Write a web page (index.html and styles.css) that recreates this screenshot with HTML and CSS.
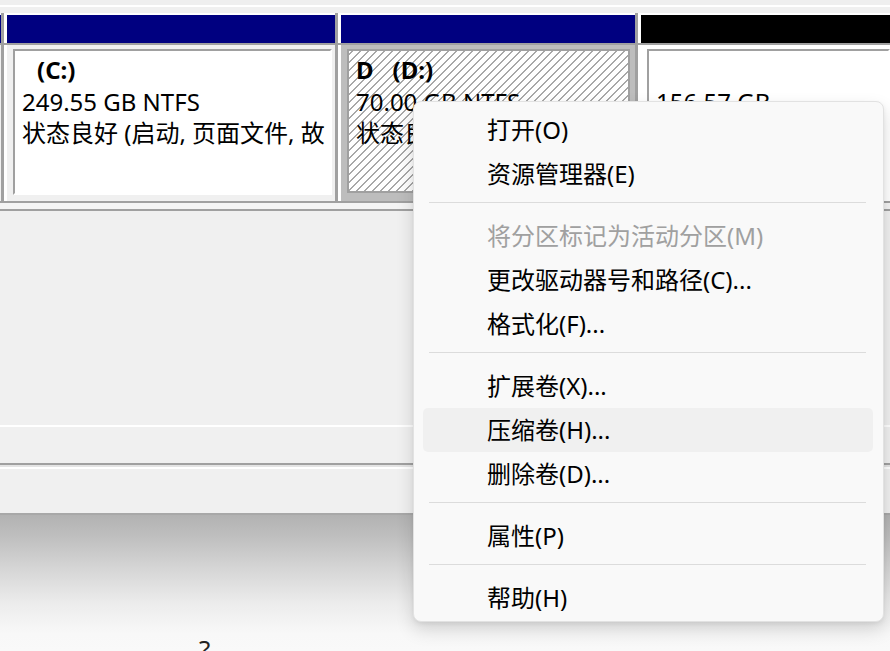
FILE: index.html
```html
<!DOCTYPE html>
<html lang="zh-CN">
<head>
<meta charset="utf-8">
<title>磁盘管理</title>
<link rel="stylesheet" href="styles.css">
</head>
<body>
<div class="app">
  <div class="topbar"></div>
  <div class="disk-row">
    <div class="col col-prev">
      <div class="head-wrap"><div class="head navy"></div></div>
      <div class="body plain"></div>
    </div>
    <div class="sep"></div>
    <div class="col col-c">
      <div class="head-wrap"><div class="head navy"></div></div>
      <div class="body plain">
        <div class="vol">
          <div class="label"><span class="drive">(C:)</span></div>
          <div class="line">249.55 GB NTFS</div>
          <div class="line">状态良好 (启动, 页面文件, 故</div>
        </div>
      </div>
    </div>
    <div class="sep"></div>
    <div class="col col-d">
      <div class="head-wrap"><div class="head navy"></div></div>
      <div class="body selected">
        <div class="vol hatched">
          <div class="label">D<span class="drive">(D:)</span></div>
          <div class="line">70.00 GB NTFS</div>
          <div class="line">状态良好 (基本数据分区)</div>
        </div>
      </div>
    </div>
    <div class="sep"></div>
    <div class="col col-e">
      <div class="head-wrap"><div class="head black"></div></div>
      <div class="body white">
        <div class="vol">
          <div class="label"> </div>
          <div class="line">156.57 GB</div>
          <div class="line">未分配</div>
        </div>
      </div>
    </div>
  </div>
  <div class="row-gap"></div>
  <div class="empty"></div>
  <div class="band"></div>
  <div class="status"></div>
  <div class="shade"><span class="glyph">?</span></div>
</div>

<div class="menu">
  <div class="item">打开(O)</div>
  <div class="item">资源管理器(E)</div>
  <div class="msep"></div>
  <div class="item disabled">将分区标记为活动分区(M)</div>
  <div class="item">更改驱动器号和路径(C)...</div>
  <div class="item">格式化(F)...</div>
  <div class="msep"></div>
  <div class="item">扩展卷(X)...</div>
  <div class="item hover">压缩卷(H)...</div>
  <div class="item">删除卷(D)...</div>
  <div class="msep"></div>
  <div class="item">属性(P)</div>
  <div class="msep"></div>
  <div class="item">帮助(H)</div>
</div>
</body>
</html>
```
FILE: styles.css
```css
html, body {
  margin: 0;
  padding: 0;
}
body {
  width: 890px;
  height: 651px;
  overflow: hidden;
  position: relative;
  background: #f0f0f0;
  font-family: "Noto Sans", "Noto Sans CJK SC", sans-serif;
  font-size: 24px;
  color: #000;
}
.app {
  display: flex;
  flex-direction: column;
  width: 890px;
  height: 651px;
}
.topbar {
  height: 13px;
  box-sizing: border-box;
  background: #f0f0f0;
  border-top: 5px solid #efefef;
  box-shadow: inset 0 2px #ffffff;
}
.disk-row {
  display: flex;
  height: 190px;
  box-sizing: border-box;
  border-bottom: 2px solid #a0a0a0;
  overflow: hidden;
}
.sep {
  width: 3px;
  flex: none;
  background: #a0a0a0;
}
.col {
  display: flex;
  flex-direction: column;
  flex: none;
  min-width: 0;
}
.col-prev { width: 1px; }
.col-c { width: 331px; }
.col-d { width: 297px; }
.col-e { width: 252px; }
.head-wrap {
  background: #fff;
  padding: 2px 0 0 3px;
  border-bottom: 2px solid #a0a0a0;
}
.col-prev .head-wrap { padding-left: 0; }
.head {
  height: 28px;
}
.navy { background: #000080; }
.black { background: #000; }
.body {
  flex: 1;
  box-sizing: border-box;
  display: flex;
  min-height: 0;
}
.plain {
  background: #f0f0f0;
  border-left: 3px solid #fff;
  padding: 4px 3px 6px 6px;
}
.col-prev .plain { border-left: 0; padding: 0; }
.selected {
  background: #bdbdbd;
  border-left: 3px solid #fff;
  padding: 4px 5px 8px 6px;
}
.white {
  background: #fff;
  border-left: 3px solid #fff;
  padding: 4px 0 6px 6px;
}
.vol {
  flex: 1;
  min-width: 0;
  background: #fff;
  border-top: 2px solid #a0a0a0;
  border-left: 2px solid #a0a0a0;
  border-right: 2px solid #fff;
  border-bottom: 2px solid #fff;
  padding: 3px 0 0 7px;
  overflow: hidden;
  line-height: 31.5px;
}
.label, .line {
  white-space: pre;
  height: 31.5px;
}
.hatched {
  border-right-color: #a0a0a0;
  border-bottom-color: #a0a0a0;
  background: repeating-linear-gradient(-45deg, #ffffff 0 4.6px, #a8a8a8 4.6px 5.66px);
}
.label {
  font-weight: 700;
}
.drive {
  margin-left: 15px;
}
.col-d .drive {
  margin-left: 19px;
}
.row-gap {
  height: 6px;
  background: #f4f4f4;
  border-bottom: 2px solid #a0a0a0;
}
.empty {
  height: 214px;
  background: #f0f0f0;
  border-bottom: 2px solid #fff;
}
.band {
  height: 36px;
  background: #f0f0f0;
  border-bottom: 2px solid #a0a0a0;
}
.status {
  height: 48px;
  box-sizing: border-box;
  background: #f0f0f0;
  border-top: 2px solid #e4e4e4;
  box-shadow: inset 0 2px #ffffff;
}
.shade {
  flex: 1;
  box-sizing: border-box;
  border-top: 2px solid #a8a8a8;
  background: linear-gradient(#b2b2b2 0%, #bfbfbf 16%, #d6d6d6 40%, #ececec 65%, #f8f8f8 87%, #f9f9f9 100%);
  padding: 119px 0 0 199px;
  overflow: hidden;
}
.glyph {
  display: block;
  font-size: 26px;
  line-height: 30px;
  color: #222;
}
.menu {
  position: absolute;
  left: 413px;
  top: 101px;
  width: 471px;
  height: 521px;
  box-sizing: border-box;
  background: #f9f9f9;
  border: 1px solid #e2e2e2;
  border-radius: 8px;
  padding: 6px 0 1px;
  box-shadow: 0 8px 18px rgba(0, 0, 0, 0.14), 0 2px 4px rgba(0, 0, 0, 0.06);
}
.item {
  height: 44px;
  line-height: 44px;
  margin: 0 10px 0 9px;
  padding-left: 64px;
  border-radius: 5px;
  white-space: nowrap;
  color: #000;
}
.item.disabled {
  color: #a0a0a0;
}
.item.hover {
  background: #f0f0f0;
}
.msep {
  height: 18px;
  box-sizing: border-box;
  padding-top: 6px;
  margin: 0 17px 0 15px;
}
.msep::before {
  content: "";
  display: block;
  height: 1px;
  background: #dcdcdc;
}
```
